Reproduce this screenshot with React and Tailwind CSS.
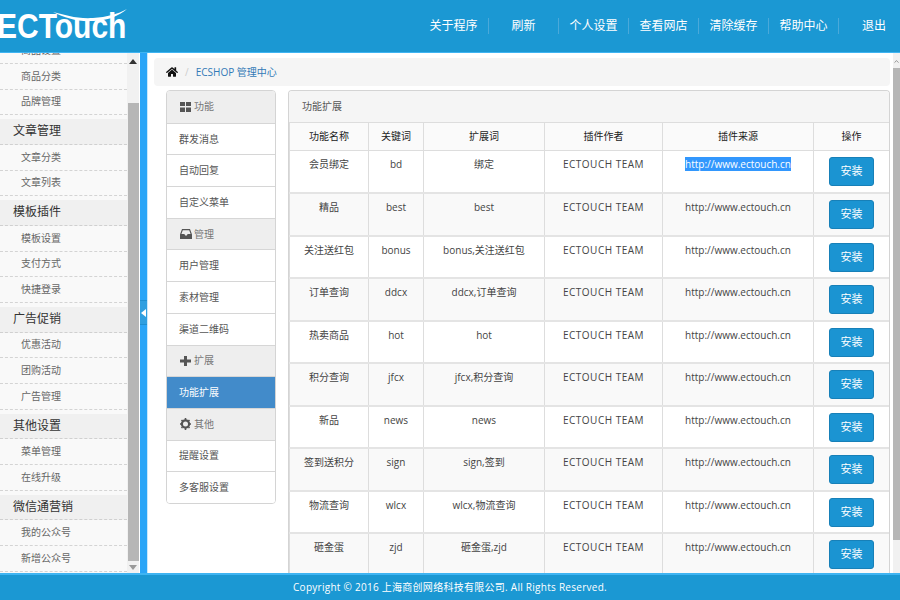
import React from 'react';
import { ChevronUp } from 'lucide-react';
import { FaHome } from 'react-icons/fa';

const font = "font-['Open_Sans','Noto_Sans_CJK_SC',sans-serif]";

const topLinks = ['关于程序', '刷新', '个人设置', '查看网店', '清除缓存', '帮助中心'];

const sideGroups = [
  { items: ['商品设置', '商品分类', '品牌管理'] },
  { title: '文章管理', items: ['文章分类', '文章列表'] },
  { title: '模板插件', items: ['模板设置', '支付方式', '快捷登录'] },
  { title: '广告促销', items: ['优惠活动', '团购活动', '广告管理'] },
  { title: '其他设置', items: ['菜单管理', '在线升级'] },
  { title: '微信通营销', items: ['我的公众号', '新增公众号'] },
];

const GridIcon = () => (
  <svg width="14" height="12" viewBox="0 0 14 12" fill="#555">
    <rect x="1" y="1" width="5" height="4" />
    <rect x="7" y="1" width="5" height="4" />
    <rect x="1" y="6.500" width="5" height="4.500" />
    <rect x="7" y="6.500" width="5" height="4.500" />
  </svg>
);

const InboxIcon = () => (
  <svg width="14" height="12" viewBox="0 0 14 12" fill="#555">
    <path d="M3 1h8l2 5.500V11H1V6.500L3 1zm.8 1.200L2.400 6h3l.8 1.500h1.600L8.600 6h3L10.200 2.200H3.800z" fillRule="evenodd" />
  </svg>
);

const PlusIcon = () => (
  <svg width="14" height="12" viewBox="0 0 14 12" fill="#555">
    <path d="M5 1h3v3.500h4v3H8V11H5V7.500H1v-3h4V1z" />
  </svg>
);

const CogIcon = () => (
  <svg width="14" height="12" viewBox="0 0 14 12">
    <circle cx="6.500" cy="6" r="3.600" fill="none" stroke="#555" strokeWidth="2.200" />
    <path d="M6.500 0v12M1 6h11M2.500 2l8 8M10.500 2l-8 8" stroke="#555" strokeWidth="1.600" strokeDasharray="2 8" />
  </svg>
);

const menu = [
  { head: true, label: '功能', icon: <GridIcon /> },
  { label: '群发消息' },
  { label: '自动回复' },
  { label: '自定义菜单' },
  { head: true, label: '管理', icon: <InboxIcon /> },
  { label: '用户管理' },
  { label: '素材管理' },
  { label: '渠道二维码' },
  { head: true, label: '扩展', icon: <PlusIcon /> },
  { label: '功能扩展', active: true },
  { head: true, label: '其他', icon: <CogIcon /> },
  { label: '提醒设置' },
  { label: '多客服设置' },
];

const plugins = [
  ['会员绑定', 'bd', '绑定'],
  ['精品', 'best', 'best'],
  ['关注送红包', 'bonus', 'bonus,关注送红包'],
  ['订单查询', 'ddcx', 'ddcx,订单查询'],
  ['热卖商品', 'hot', 'hot'],
  ['积分查询', 'jfcx', 'jfcx,积分查询'],
  ['新品', 'news', 'news'],
  ['签到送积分', 'sign', 'sign,签到'],
  ['物流查询', 'wlcx', 'wlcx,物流查询'],
  ['砸金蛋', 'zjd', '砸金蛋,zjd'],
];

const columns = ['功能名称', '关键词', '扩展词', '插件作者', '插件来源', '操作'];

function Logo() {
  return (
    <div className="relative w-[140px] h-[52px] overflow-hidden shrink-0">
      <span className="absolute left-[-3px] top-[7px] text-[30px] leading-[34px] font-bold text-white font-['Liberation_Sans',sans-serif] scale-y-[1.15] origin-top">
        ECTouch
      </span>
      <svg className="absolute left-0 top-0" width="140" height="52" viewBox="0 0 140 52">
        <path d="M53 12c12 3 24 7 40 6 14-1 25-4 34-9-8 7-20 12-34 12-15 1-28-3-40-9z" fill="#fff" />
      </svg>
    </div>
  );
}

function Sidebar() {
  return (
    <div className="w-[140px] shrink-0 flex bg-white overflow-hidden">
      <div className="w-[127px] shrink-0 bg-[#f9f9f9] overflow-hidden">
        <div className="-mt-[15px]">
          {sideGroups.map((group, i) => (
            <div key={i} className="mb-[3.600px]">
              {group.title && (
                <div className="h-[25.800px] pl-[13px] flex items-center bg-[#f0f0f0] border-b border-dashed border-[#d0d0d0] text-[12px] text-[#333]">
                  {group.title}
                </div>
              )}
              {group.items.map(item => (
                <div key={item} className="h-[25.800px] pl-[21px] flex items-center border-b border-dashed border-[#d4d4d4] text-[10px] text-[#666]">
                  {item}
                </div>
              ))}
            </div>
          ))}
        </div>
      </div>
      <div className="w-[12px] shrink-0 bg-[#f1f1f1] flex flex-col items-center">
        <div className="h-[50px] w-full flex justify-center pt-[6px]">
          <svg width="8" height="5" viewBox="0 0 8 5"><path d="M4 0l4 5H0z" fill="#333" /></svg>
        </div>
        <div className="w-[11px] h-[458px] bg-[#b6b6b6]"></div>
        <div className="flex-1 w-full flex justify-center pt-[4px]">
          <svg width="8" height="5" viewBox="0 0 8 5"><path d="M0 0h8L4 5z" fill="#999" /></svg>
        </div>
      </div>
      <div className="w-px bg-white"></div>
    </div>
  );
}

function Divider() {
  return (
    <div className="w-[8px] shrink-0 bg-[#2aa5f7] flex items-center border-r border-[#c9e8fb]">
      <div className="w-full h-[25px] -mt-[1px] bg-[#2f9fe0] border-y border-[#1f8fd0] flex items-center justify-center">
        <svg width="5" height="8" viewBox="0 0 5 8"><path d="M5 0v8L0 4z" fill="#fff" /></svg>
      </div>
    </div>
  );
}

function SideMenu() {
  return (
    <div className="w-[110px] shrink-0 self-start border border-[#d4d4d4] rounded-[4px] overflow-hidden bg-white">
      {menu.map((row, i) => {
        let cls = 'bg-white text-[#555]';
        if (row.head) cls = 'bg-[#eeeeee] text-[#777]';
        if (row.active) cls = 'bg-[#428bca] text-white';
        return (
          <div
            key={row.label}
            className={`h-[31.700px] pl-[12px] flex items-center gap-[1px] text-[10px] ${i > 0 ? 'border-t border-[#d6d6d6]' : ''} ${cls}`}
          >
            {row.icon}
            <span>{row.label}</span>
          </div>
        );
      })}
    </div>
  );
}

function PluginTable() {
  return (
    <div className="w-[602px] shrink-0 border border-[#d4d4d4] border-b-0 rounded-t-[4px] overflow-hidden bg-white">
      <div className="h-[31px] pl-[13px] flex items-center bg-[#f5f5f5] text-[10px] text-[#555]">功能扩展</div>
      <table className="w-[600px] table-fixed border-collapse text-[10px] text-[#444]">
        <colgroup>
          <col className="w-[79px]" />
          <col className="w-[55px]" />
          <col className="w-[121px]" />
          <col className="w-[118px]" />
          <col className="w-[151px]" />
          <col className="w-[76px]" />
        </colgroup>
        <thead>
          <tr className="h-[28px] bg-[#fafafa] border-y border-[#dddddd]">
            {columns.map(col => (
              <th key={col} className="font-normal text-[#222] text-center border-x border-[#dddddd]">{col}</th>
            ))}
          </tr>
        </thead>
        <tbody>
          {plugins.map((p, i) => (
            <tr key={p[1]} className={`h-[42.500px] border-b-2 border-[#e4e4e4] ${i % 2 ? 'bg-[#f9f9f9]' : 'bg-white'}`}>
              <td className="align-top text-center pt-[6px] border-x border-[#dddddd]">{p[0]}</td>
              <td className="align-top text-center pt-[6px] border-x border-[#dddddd]">{p[1]}</td>
              <td className="align-top text-center pt-[6px] border-x border-[#dddddd]">{p[2]}</td>
              <td className="align-top text-center pt-[6px] border-x border-[#dddddd] tracking-[0.5px]">ECTOUCH TEAM</td>
              <td className="align-top text-center pt-[6px] border-x border-[#dddddd]">
                <span className={i === 0 ? 'bg-[#3297fd] text-white' : ''}>http://www.ectouch.cn</span>
              </td>
              <td className="align-top text-center pt-[6px] border-x border-[#dddddd]">
                <button className={`w-[45px] h-[29px] rounded-[3px] bg-[#1b94d2] border border-[#1780b8] text-white text-[11px] ${font}`}>安装</button>
              </td>
            </tr>
          ))}
        </tbody>
      </table>
    </div>
  );
}

export default function App() {
  return (
    <div className={`h-screen w-full flex flex-col overflow-hidden bg-white ${font}`}>
      <header className="h-[53px] shrink-0 flex justify-between bg-[#1b98d3] border-b border-[#3fb4f2]">
        <Logo />
        <nav className="flex items-center text-[12px] text-white">
          {topLinks.map(link => (
            <div key={link} className="w-[70px] h-[16px] flex items-center justify-center border-r border-[#4aa9da]">
              {link}
            </div>
          ))}
          <div className="w-[61px] h-[16px] pl-[9px] flex items-center justify-center">退出</div>
        </nav>
      </header>

      <div className="flex-1 flex min-h-0">
        <Sidebar />
        <Divider />
        <main className="flex-1 min-w-0 flex overflow-hidden">
          <div className="flex-1 min-w-0 pl-[6px] pr-[3px] pt-[5px]">
            <div className="h-[28px] pl-[12px] flex items-center bg-[#f5f5f5] rounded-[4px] text-[10px]">
              <FaHome className="w-[12px] h-[12px] text-[#111]" />
              <span className="mx-[7px] text-[#ccc]">/</span>
              <span className="text-[#337ab7]">ECSHOP 管理中心</span>
            </div>
            <div className="flex gap-[12px] pl-[12px] pt-[4px]">
              <SideMenu />
              <PluginTable />
            </div>
          </div>
          <div className="w-[7px] shrink-0 bg-[#f1f1f1] flex flex-col items-center">
            <ChevronUp className="w-[7px] h-[7px] mt-[5px] text-[#555]" />
            <div className="w-full h-[472px] mt-[3px] bg-[#b6b6b6]"></div>
          </div>
        </main>
      </div>

      <footer className="h-[27px] shrink-0 flex items-center justify-center bg-[#1b98d3] border-t-2 border-[#3fb4f2] text-[10px] text-white tracking-[0.27px]">
        Copyright © 2016 上海商创网络科技有限公司. All Rights Reserved.
      </footer>
    </div>
  );
}
